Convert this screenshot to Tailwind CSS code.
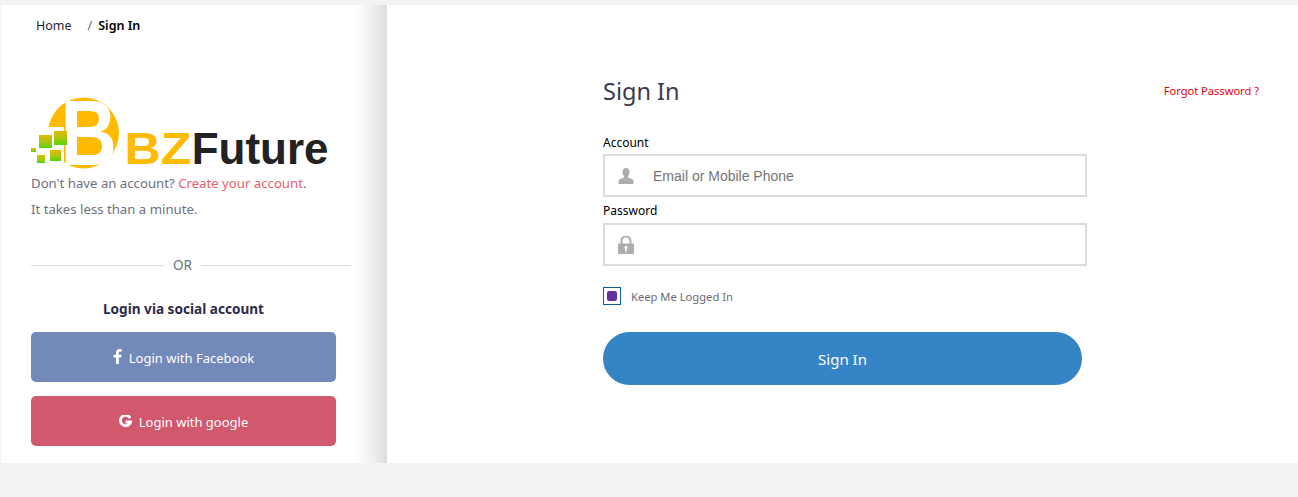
<!DOCTYPE html>
<html lang="en">
  <head>
    <meta charset="UTF-8" />
    <meta name="viewport" content="width=device-width, initial-scale=1.0" />
    <title>Sign In</title>
    <script src="https://cdn.jsdelivr.net/npm/@tailwindcss/browser@4"></script>
  </head>
  <body class="h-[497px] overflow-hidden bg-[#f3f3f3] pt-[5px] pl-px font-['Noto_Sans',sans-serif]">
    <main class="flex h-[458px] bg-white">
      <!-- left panel -->
      <section class="w-[386px] h-full bg-gradient-to-r from-white from-[92%] via-[#ececec] via-[97%] to-[#dcdcdc]">
        <nav class="flex items-center h-[43px] pl-[35px] text-[12.500px] text-[#1d1d35]">
          <a href="#">Home</a>
          <span class="ml-4 text-[#5b6b85]">/</span>
          <span class="ml-[6px] font-semibold text-black">Sign In</span>
        </nav>
        <div class="pl-[30px] pt-[49px]">
          <svg class="block overflow-visible" width="300" height="72" viewBox="0 0 300 72">
            <defs>
              <linearGradient id="sq" x1="0" y1="0" x2="0" y2="1">
                <stop offset="0" stop-color="#e6b800" />
                <stop offset="0.55" stop-color="#a8c810" />
                <stop offset="1" stop-color="#4fd60a" />
              </linearGradient>
            </defs>
            <circle cx="52.500" cy="36" r="35.500" fill="#ffbb00" />
            <path d="M0 30 H33 V72 H0 Z" fill="#fff" />
            <text transform="translate(29.600 68) scale(0.85 1)" font-family="Liberation Sans" font-weight="700" font-size="92" fill="#fff">B</text>
            <rect x="8" y="38" width="13" height="13" fill="url(#sq)" />
            <rect x="23" y="34" width="13" height="14" fill="url(#sq)" />
            <rect x="0" y="51" width="5" height="4" fill="url(#sq)" />
            <rect x="6" y="58" width="8" height="8" fill="url(#sq)" />
            <rect x="19" y="53" width="11" height="11" fill="url(#sq)" />
            <text x="93.500" y="66.500" font-family="Liberation Sans" font-weight="700" font-size="44" fill="#ffbb00" textLength="67" lengthAdjust="spacingAndGlyphs">BZ</text>
            <text x="160.700" y="66.500" font-family="Liberation Sans" font-weight="700" font-size="44" fill="#222222">Future</text>
          </svg>
          <p class="mt-[2px] h-[26px] text-[13.200px] leading-[25px] text-[#6f6f7d]">Don't have an account? <a href="#" class="text-[#e8606a]">Create your account</a>.</p>
          <p class="h-[25px] text-[13.200px] leading-[25px] text-[#6f6f7d]">It takes less than a minute.</p>
          <div class="flex items-center w-[320px] mt-[33px] text-[13.500px] text-[#6b7383]">
            <span class="w-[133px] h-px bg-[#dedede]"></span>
            <span class="pl-[9px] pr-[9px]">OR</span>
            <span class="flex-1 h-px bg-[#dedede]"></span>
          </div>
          <p class="w-[305px] mt-[24px] text-center text-[13.600px] font-bold text-[#2c2c4a]">Login via social account</p>
          <a href="#" class="flex items-center justify-center w-[305px] h-[50px] mt-[12px] pt-[4px] rounded-[5px] bg-[#7289ba] text-[13px] text-white">
            <svg class="mr-[7px] mb-[4px]" width="9" height="15" viewBox="0 0 9 15" fill="#fff"><path d="M5.800 15V8.400h2.400l.4-2.700H5.800V4c0-.8.3-1.300 1.400-1.300h1.500V.2C8.400.1 7.500 0 6.600 0 4.500 0 3 1.300 3 3.700v2H.6v2.700H3V15z" /></svg>
            Login with Facebook
          </a>
          <a href="#" class="flex items-center justify-center w-[305px] h-[50px] mt-[14px] pt-[4px] rounded-[5px] bg-[#d1586d] text-[13px] text-white">
            <svg class="mr-[7px] mb-[2px]" width="13" height="13" viewBox="0 0 13 13" fill="none"><path d="M11.200 3A5.200 5.200 0 1 0 11.600 7H6.600" stroke="#fff" stroke-width="2.800" /></svg>
            Login with google
          </a>
        </div>
      </section>

      <!-- sign in form -->
      <section class="flex-1 pl-[216px] pr-[39px] pt-[70px]">
        <div class="flex items-center justify-between h-[32px]">
          <h1 class="pt-[2px] text-[23.500px] text-[#3b3b4d]">Sign In</h1>
          <a href="#" class="text-[11.100px] text-[#e8000d]">Forgot Password ?</a>
        </div>
        <form class="w-[484px]">
          <label class="block mt-[26px] h-[21px] text-[12px] leading-[19px] text-black">Account</label>
          <div class="flex items-center h-[43px] border-2 border-[#dcdcdc]">
            <svg class="ml-[13px]" width="16" height="16" viewBox="0 0 16 16" fill="#adadad"><path d="M8 0c2.300 0 3.600 1.700 3.600 4 0 1.700-.7 3.200-1.600 4v1.400c2 .7 5 1.400 5.500 3V16H.5v-3.600c.5-1.600 3.500-2.300 5.500-3V8C5.100 7.200 4.400 5.700 4.400 4 4.400 1.700 5.700 0 8 0z" /></svg>
            <span class="ml-[19px] pt-[2px] font-['Liberation_Sans',sans-serif] text-[14px] text-[#757575]">Email or Mobile Phone</span>
          </div>
          <label class="block mt-px h-[25px] text-[12px] leading-[25px] text-black">Password</label>
          <div class="flex items-center h-[43px] border-2 border-[#dcdcdc]">
            <svg class="ml-[13px]" width="16" height="18" viewBox="0 0 16 18"><path d="M3.500 8V5a4.500 4.500 0 0 1 9 0v3" fill="none" stroke="#adadad" stroke-width="2" /><path fill-rule="evenodd" d="M1 7.500h14a1 1 0 0 1 1 1V17a1 1 0 0 1-1 1H1a1 1 0 0 1-1-1V8.500a1 1 0 0 1 1-1zM8 10a1.500 1.500 0 0 0-.8 2.800V15.500h1.600v-2.700A1.500 1.500 0 0 0 8 10z" fill="#adadad" /></svg>
          </div>
          <label class="flex items-center mt-[21px] h-[18px] text-[11.200px] text-[#6b6b7a]">
            <span class="flex items-center justify-center w-[18px] h-[18px] border border-[#0b62a8]">
              <span class="w-[10px] h-[10px] rounded-[2px] bg-[#6a3299]"></span>
            </span>
            <span class="ml-[10px] pt-[2px]">Keep Me Logged In</span>
          </label>
          <button type="button" class="block w-[479px] h-[53px] mt-[27px] pt-[2px] rounded-full bg-[#3584c6] text-[15px] text-white">Sign In</button>
        </form>
      </section>
    </main>
  </body>
</html>
